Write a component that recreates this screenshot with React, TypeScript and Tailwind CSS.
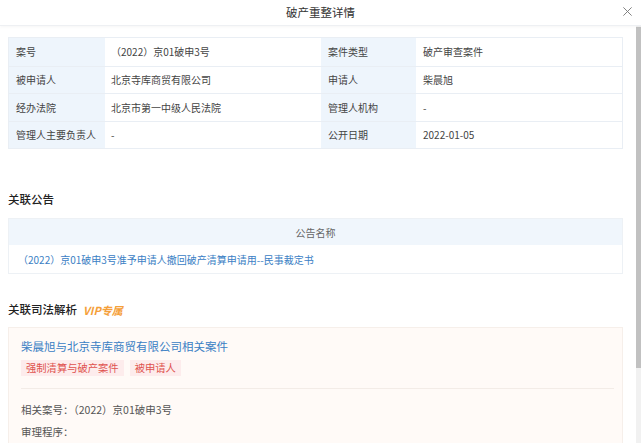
import React from 'react';

const font = { fontFamily: '"Noto Sans CJK SC", "Noto Sans", sans-serif' };

const rows: [string, string, string, string][] = [
  ['案号', '（2022）京01破申3号', '案件类型', '破产审查案件'],
  ['被申请人', '北京寺库商贸有限公司', '申请人', '柴晨旭'],
  ['经办法院', '北京市第一中级人民法院', '管理人机构', '-'],
  ['管理人主要负责人', '-', '公开日期', '2022-01-05'],
];

export default function App() {
  return (
    <div className="relative w-[641px] h-[443px] overflow-hidden bg-white text-[10px] text-[#444]" style={font}>
      {/* header */}
      <div className="relative h-[26px] flex items-center justify-center border-b border-[#eef0f3] shadow-[0_1px_3px_rgba(0,0,0,0.04)]">
        <span className="text-[11.5px] text-[#333]">破产重整详情</span>
        <span className="absolute right-[8px] top-[6px]">
          <svg width="11" height="11" viewBox="0 0 12 12" fill="none" stroke="#777" strokeWidth="1">
            <path d="M1.5 1.5 L10.5 10.5 M10.5 1.5 L1.5 10.5" />
          </svg>
        </span>
      </div>

      <div className="flex h-[417px]">
        <div className="flex-1 pl-[8px] pr-[13px] pt-[11px]">
          {/* base info */}
          <div className="border border-[#e9eef4]">
            {rows.map((r, i) => (
              <div key={i} className={`flex h-[27.5px] whitespace-nowrap ${i > 0 ? 'border-t border-[#e9eef4]' : ''}`}>
                <div className="w-[96px] bg-[#eef5fc] flex items-center pl-[7px]">{r[0]}</div>
                <div className="w-[216px] flex items-center pl-[6px]">{r[1]}</div>
                <div className="w-[95px] bg-[#eef5fc] flex items-center pl-[7px]">{r[2]}</div>
                <div className="flex-1 flex items-center pl-[7px]">{r[3]}</div>
              </div>
            ))}
          </div>

          {/* announcements */}
          <div className="mt-[42px] h-[16px] leading-[16px] text-[11.5px] font-medium text-[#222]">关联公告</div>
          <div className="mt-[11px] border border-[#edf1f5]">
            <div className="h-[26px] bg-[#f0f6fc] flex items-center justify-center text-[#666]">公告名称</div>
            <div className="h-[28px] flex items-center pl-[9px] text-[#3a80c4]">
              （2022）京01破申3号准予申请人撤回破产清算申请用--民事裁定书
            </div>
          </div>

          {/* judicial analysis */}
          <div className="mt-[28px] h-[16px] flex items-center gap-[6px]">
            <span className="text-[11.5px] font-medium text-[#222]">关联司法解析</span>
            <span className="text-[11px] font-bold italic text-[#f5a03a]">VIP专属</span>
          </div>
          <div className="mt-[9px] h-[140px] bg-[#fffaf7] border border-[#f6efea] pl-[12px] pr-[8px]">
            <div className="mt-[10px] h-[16px] leading-[16px] text-[11.5px] text-[#3a80c4]">柴晨旭与北京寺库商贸有限公司相关案件</div>
            <div className="mt-[6px] flex gap-[6px]">
              <span className="h-[16px] leading-[16px] px-[5px] bg-[#fdecec] text-[#e0534f] text-[10.3px]">强制清算与破产案件</span>
              <span className="h-[16px] leading-[16px] px-[5px] bg-[#fdecec] text-[#e0534f] text-[10.3px]">被申请人</span>
            </div>
            <div className="mt-[12px] border-t border-[#f3ece7]" />
            <div className="mt-[13px] h-[16px] leading-[16px] text-[10.5px] text-[#555]">相关案号：（2022）京01破申3号</div>
            <div className="mt-[6px] h-[16px] leading-[16px] text-[10.5px] text-[#555]">审理程序：</div>
          </div>
        </div>

        {/* scrollbar */}
        <div className="w-[5px] bg-[#f1f1f1] pt-[1px]">
          <div className="h-[341px] bg-[#c1c1c1]" />
        </div>
      </div>
    </div>
  );
}
